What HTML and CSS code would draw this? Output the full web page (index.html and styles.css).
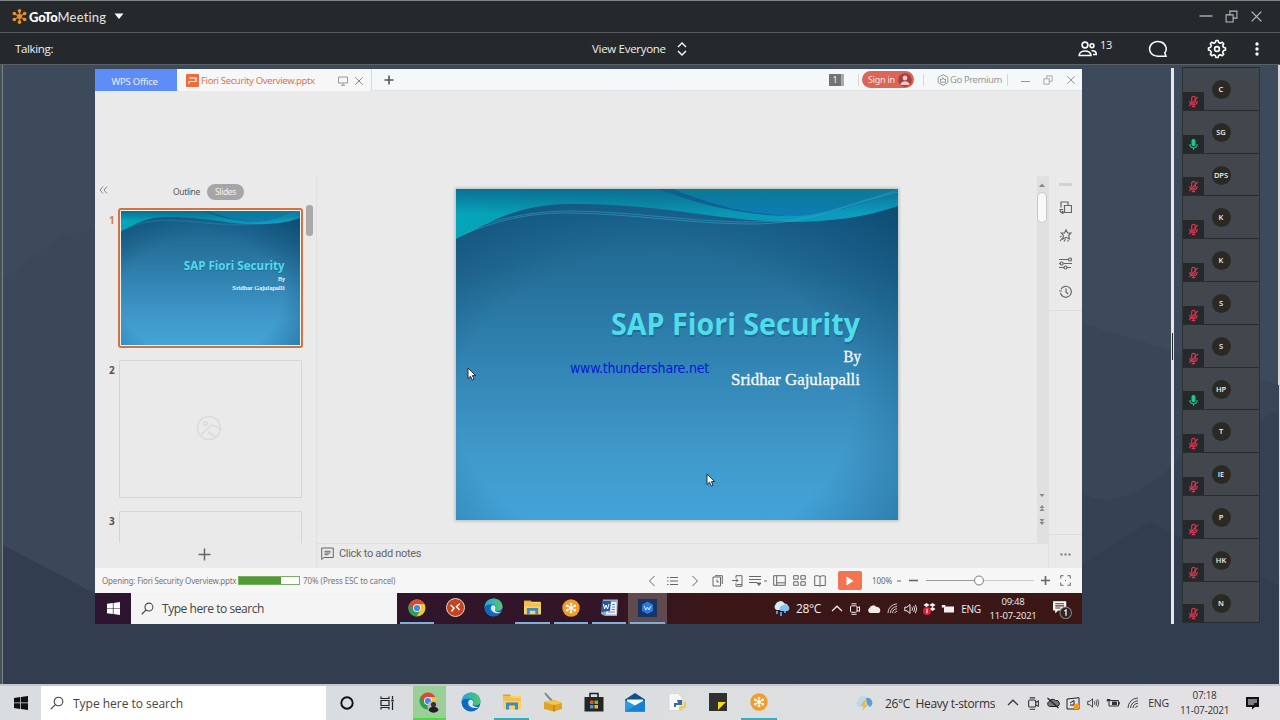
FILE: index.html
```html
<!DOCTYPE html>
<html lang="en">
<head>
  <meta charset="utf-8">
  <title>GoToMeeting</title>
  <link rel="stylesheet" href="styles.css">
</head>
<body>

<!-- shared icons -->
<svg class="defs" width="0" height="0">
  <defs>
    <linearGradient id="bg" x1="0" y1="0" x2="0" y2="1">
      <stop offset="0" stop-color="#1a6691"/>
      <stop offset=".25" stop-color="#246f99"/>
      <stop offset=".55" stop-color="#3386b5"/>
      <stop offset=".8" stop-color="#4099ca"/>
      <stop offset="1" stop-color="#43a3d8"/>
    </linearGradient>
    <radialGradient id="shade" cx=".45" cy=".65" r=".9">
      <stop offset=".5" stop-color="#04395e" stop-opacity="0"/>
      <stop offset="1" stop-color="#04395e" stop-opacity=".75"/>
    </radialGradient>
    <linearGradient id="wave" x1="0" y1="0" x2="1" y2="0">
      <stop offset="0" stop-color="#05a5ba"/>
      <stop offset=".45" stop-color="#0a94b0"/>
      <stop offset="1" stop-color="#0b9fc0"/>
    </linearGradient>
    <linearGradient id="waveTop" x1="0" y1="0" x2="0" y2="1">
      <stop offset="0" stop-color="#0b5f86" stop-opacity=".75"/>
      <stop offset=".5" stop-color="#0b5f86" stop-opacity="0"/>
    </linearGradient>
    <linearGradient id="waveBlue" x1="0" y1="0" x2="0" y2="1">
      <stop offset="0" stop-color="#0d7a93"/>
      <stop offset="1" stop-color="#0c7cb8"/>
    </linearGradient>
    <linearGradient id="edgeG" x1="0" y1="0" x2="1" y2="1">
      <stop offset="0" stop-color="#1fa4dc"/>
      <stop offset="1" stop-color="#0d57a8"/>
    </linearGradient>
    <linearGradient id="edgeT" x1="0" y1="0" x2="1" y2="0">
      <stop offset="0" stop-color="#21a6e0"/>
      <stop offset="1" stop-color="#51c768"/>
    </linearGradient>
  </defs>

  <symbol id="slide" viewBox="0 0 442 331">
    <rect width="442" height="331" fill="url(#bg)"/>
    <rect width="442" height="331" fill="url(#shade)"/>
    <path d="M0 0H442V17C410 28 375 33 334 33C275 32 235 22 184 18C150 15 130 15 111 15C60 16 38 32 0 50Z" fill="url(#wave)"/>
    <path d="M0 0H442V17C410 28 375 33 334 33C275 32 235 22 184 18C150 15 130 15 111 15C60 16 38 32 0 50Z" fill="url(#waveTop)"/>
    <path d="M202 0H225L330 27L311 26C270 22 240 14 202 0Z" fill="#0c6190"/>
    <path d="M217 0H442V1C405 16 370 27 337 27C290 25 262 18 217 0Z" fill="url(#waveBlue)"/>
    <path d="M8 45C50 28 80 24 111 24C170 24 235 35 294 35C355 35 380 18 442 3" fill="none" stroke="#39b6c4" stroke-width=".8" opacity=".6"/>
    <path d="M20 38C55 26 85 22 115 22C170 22 235 33 294 33C350 33 385 18 442 1" fill="none" stroke="#2595c4" stroke-width=".7"/>
    <g text-anchor="end">
      <text x="404.500" y="147.500" class="slide-title shadow" textLength="249" lengthAdjust="spacingAndGlyphs">SAP Fiori Security</text>
      <text x="404" y="145.500" class="slide-title" textLength="249" lengthAdjust="spacingAndGlyphs">SAP Fiori Security</text>
      <text x="405" y="173" class="slide-sub" textLength="17.500" lengthAdjust="spacingAndGlyphs">By</text>
      <text x="404" y="196" class="slide-sub" textLength="129" lengthAdjust="spacingAndGlyphs">Sridhar Gajulapalli</text>
    </g>
  </symbol>

  <symbol id="gtm" viewBox="0 0 14 14">
    <g stroke="currentColor" stroke-width="1.3">
      <path d="M7 1.500V12.500M2 4.200L12 9.800M2 9.800L12 4.200"/>
    </g>
    <g fill="currentColor">
      <circle cx="7" cy="7" r="2.300"/>
      <circle cx="7" cy="1.700" r="1.700"/><circle cx="7" cy="12.300" r="1.700"/>
      <circle cx="2.200" cy="4.200" r="1.700"/><circle cx="11.800" cy="9.800" r="1.700"/>
      <circle cx="2.200" cy="9.800" r="1.700"/><circle cx="11.800" cy="4.200" r="1.700"/>
    </g>
  </symbol>
  <symbol id="mic" viewBox="0 0 12 14">
    <rect x="3.800" y="1" width="4.400" height="8" rx="2.200" fill="#16c98d"/>
    <path d="M2 6.500C2 12 10 12 10 6.500M6 10.500V13" fill="none" stroke="#16c98d" stroke-width="1.200"/>
  </symbol>
  <symbol id="muted" viewBox="0 0 12 14">
    <rect x="4" y="1.500" width="4" height="7.500" rx="2" fill="none" stroke="#dc3350" stroke-width="1.300"/>
    <path d="M2 6.500C2 12 10 12 10 6.500M6 10.500V12.500M4 12.500H8M1.300 11.800L10.800 2" fill="none" stroke="#dc3350" stroke-width="1.300"/>
  </symbol>
  <symbol id="win" viewBox="0 0 14 14">
    <path d="M0 2L6.300 1.100V6.600H0ZM7 1L14 0V6.600H7ZM0 7.300H6.300V12.900L0 12ZM7 7.300H14V14L7 13Z" fill="currentColor"/>
  </symbol>
  <symbol id="search" viewBox="0 0 14 14">
    <circle cx="8.500" cy="5.500" r="4.300" fill="none" stroke="currentColor" stroke-width="1.100"/>
    <path d="M5.400 8.600L.8 13.200" stroke="currentColor" stroke-width="1.200"/>
  </symbol>
  <symbol id="chrome" viewBox="0 0 18 18">
    <circle cx="9" cy="9" r="8.500" fill="#f3c435"/>
    <path d="M9 9L1.700 4.600A8.500 8.500 0 0 0 8.600 17.500L12.500 11Z" fill="#2d9e52"/>
    <path d="M1.700 4.700A8.500 8.500 0 0 1 16.400 5H9L5.500 11Z" fill="#d8493a"/>
    <circle cx="9" cy="9" r="4" fill="#f2f2f2"/>
    <circle cx="9" cy="9" r="3.100" fill="#4a86e0"/>
  </symbol>
  <symbol id="edge" viewBox="0 0 20 20">
    <circle cx="10" cy="10" r="9.500" fill="url(#edgeG)"/>
    <path d="M.6 9C1.500 3.500 5.500.5 10.300.5C16 .5 19.500 5 19.500 9C19.500 12 17 13.500 14.500 13.500C12.500 13.500 11.500 12.800 12.200 11.500C13.500 8.500 11 6.300 7.800 6.300C4.500 6.300 2 7.500.6 9Z" fill="url(#edgeT)"/>
    <path d="M8.500 8C5.500 10.500 8.500 16 13.500 16C15.500 16 17 15.300 18 14.400C14 16 10.500 13.500 12 11.500C13 9 10.500 7 8.500 8Z" fill="#dcecf2"/>
    <path d="M7.500 8.500C4.500 11.500 7 17 12 18.800C8 20.500.8 17 .6 9.500C3 6.500 6.500 6.500 7.500 8.500Z" fill="#1467b8"/>
  </symbol>
  <symbol id="folder" viewBox="0 0 20 18">
    <path d="M1 1.500H8L9.500 3.500H1Z" fill="#d9a02c"/>
    <rect x="1" y="3" width="18" height="13.500" rx=".5" fill="#f7d269"/>
    <path d="M1 3H8L9.500 5H19V8H1Z" fill="#f2c04c"/>
    <path d="M4 9.500H16V16.500H13V12.500H7V16.500H4Z" fill="#3f8cc4"/>
  </symbol>
  <symbol id="gtm-badge" viewBox="0 0 18 18">
    <circle cx="9" cy="9" r="8.700" fill="#f39c2e"/>
    <svg x="3.500" y="3.500" width="11" height="11" color="#fff8ec"><use href="#gtm"/></svg>
  </symbol>
  <symbol id="up" viewBox="0 0 12 12"><path d="M1 8L6 3.200L11 8" fill="none" stroke="currentColor" stroke-width="1.200"/></symbol>
  <symbol id="cam" viewBox="0 0 12 12">
    <rect x="1.500" y="2.800" width="6.500" height="6.500" rx="1.200" fill="none" stroke="currentColor"/>
    <path d="M8 5L10.500 3.700V8.500L8 7.300M2.500 .8H7.500M2.500 11.300H7.500" fill="none" stroke="currentColor"/>
  </symbol>
  <symbol id="wifi" viewBox="0 0 12 12">
    <path d="M1 11A10 10 0 0 1 11 1M3.600 11A7.500 7.500 0 0 1 11 3.800M6 11A5 5 0 0 1 11 6.400M8.500 11A2.500 2.500 0 0 1 11 9" fill="none" stroke="currentColor" stroke-width=".9"/>
  </symbol>
  <symbol id="speaker" viewBox="0 0 14 12">
    <path d="M.8 4.200H3L6 1.500V10.500L3 7.800H.8Z" fill="none" stroke="currentColor"/>
    <path d="M8 4.300Q9 6 8 7.700M9.700 3Q11.500 6 9.700 9M11.400 1.800Q13.800 6 11.400 10.200" fill="none" stroke="currentColor" stroke-width=".9"/>
  </symbol>
  <symbol id="battery" viewBox="0 0 14 12">
    <path d="M4 3.500H12.500V9H3V5" fill="none" stroke="currentColor"/>
    <path d="M6 4.500H11V8H6ZM12.500 5H13.800V7.500H12.500ZM.8 2H4.300V4.500H.8Z" fill="currentColor"/>
  </symbol>
  <symbol id="cursor" viewBox="0 0 10 14">
    <path d="M1 1V11.500L3.500 9.200L5.200 13L7 12.200L5.400 8.600H8.700Z" fill="#fff" stroke="#16202c" stroke-width=".9"/>
  </symbol>
  <symbol id="restore" viewBox="0 0 12 12">
    <path d="M1 4.500H7.500V11H1ZM4.500 4.500V1H11V7.500H7.500" fill="none" stroke="currentColor"/>
  </symbol>
  <symbol id="x" viewBox="0 0 12 12"><path d="M1.500 1.500L10.500 10.500M10.500 1.500L1.500 10.500" stroke="currentColor" stroke-width="1.200"/></symbol>
</svg>

<header class="titlebar">
  <svg class="logo" width="15" height="15"><use href="#gtm"/></svg>
  <span class="brand"><b>GoTo</b>Meeting</span>
  <svg width="10" height="7" viewBox="0 0 10 7"><path d="M.5 .5H9.500L5 6Z" fill="#fff"/></svg>
  <div class="winbtns">
    <svg width="14" height="12"><path d="M.5 6H13.500" stroke="currentColor" stroke-width="1.300"/></svg>
    <svg width="13" height="13"><use href="#restore"/></svg>
    <svg width="13" height="13"><use href="#x"/></svg>
  </div>
</header>

<div class="toolbar">
  <span class="talking">Talking:</span>
  <span class="view">View Everyone
    <svg width="10" height="14" viewBox="0 0 10 14" fill="none" stroke="#fff" stroke-width="1.400"><path d="M1 5L5 1L9 5M1 9L5 13L9 9"/></svg>
  </span>
  <div class="tools">
    <svg width="20" height="18" viewBox="0 0 20 18" fill="none" stroke="#fff" stroke-width="1.600">
      <circle cx="7" cy="5" r="2.900"/><circle cx="14" cy="5.700" r="1.900"/>
      <path d="M1.200 15.500C1.200 9.500 13 9.500 13 15.500ZM13.500 10.800C17 10.300 18.500 12 18.300 14.500H15"/>
    </svg>
    <sup>13</sup>
    <svg width="20" height="18" viewBox="0 0 20 18" fill="none" stroke="#fff" stroke-width="1.500"><path d="M18 16.300H10A8.300 7.400 0 1 1 16.800 13Z"/></svg>
    <svg width="20" height="20" viewBox="0 0 20 20" fill="none" stroke="#fff" stroke-width="1.600">
      <path d="M8.300 3.600L9 1.500H11L11.700 3.600L13.300 4.300L15.300 3.300L16.700 4.700L15.700 6.700L16.400 8.300L18.500 9V11L16.400 11.700L15.700 13.300L16.700 15.300L15.300 16.700L13.300 15.700L11.700 16.400L11 18.500H9L8.300 16.400L6.700 15.700L4.700 16.700L3.300 15.300L4.300 13.300L3.600 11.700L1.500 11V9L3.600 8.300L4.300 6.700L3.300 4.700L4.700 3.300L6.700 4.300Z" stroke-linejoin="round"/>
      <circle cx="10" cy="10" r="2.400"/>
    </svg>
    <svg width="6" height="16" viewBox="0 0 6 16" fill="#fff"><circle cx="3" cy="3" r="1.700"/><circle cx="3" cy="8" r="1.700"/><circle cx="3" cy="13" r="1.700"/></svg>
  </div>
</div>

<main class="stage">
  <svg class="hills" viewBox="0 0 1280 619" preserveAspectRatio="none">
    <path d="M0 215L60 170L95 165V619H0Z" fill="#37455a" opacity=".5"/>
    <path d="M1082 258L1172 286L1280 320V619H1082Z" fill="#394658"/>
    <path d="M1082 428C1110 444 1140 430 1180 395L1280 345V619H1082Z" fill="#354254"/>
    <path d="M0 619V480L95 530L1082 500L1150 457L1280 520V619Z" fill="#323e4f"/>
  </svg>

  <section class="share">
    <div class="tabs">
      <div class="tab-home">WPS Office</div>
      <div class="tab-file">
        <svg width="13" height="13" viewBox="0 0 13 13"><rect width="13" height="13" rx="1" fill="#ee6b3c"/><path d="M3 4H10V7.500H3V10" fill="none" stroke="#fff" stroke-width="1.200"/></svg>
        <span>Fiori Security Overview.pptx</span>
        <svg width="10" height="10" viewBox="0 0 10 10" fill="none" stroke="#999"><path d="M.5 1H9.500V7H.5ZM5 7V9M3 9.300H7"/></svg>
        <svg class="tab-x" width="10" height="10"><use href="#x"/></svg>
      </div>
      <svg class="tab-add" width="10" height="10"><path d="M5 .5V9.500M.5 5H9.500" stroke="#555" stroke-width="1.600"/></svg>
      <div class="account">
        <span class="count">1</span>
        <i></i>
        <span class="signin">Sign in
          <svg width="14" height="14" viewBox="0 0 14 14"><circle cx="7" cy="7" r="6.800" fill="#a33f3f"/><circle cx="7" cy="5" r="2.400" fill="#efc9c6"/><path d="M2.500 12C2.500 7 11.500 7 11.500 12Z" fill="#efc9c6"/></svg>
        </span>
        <i></i>
        <svg width="12" height="12" viewBox="0 0 12 12" fill="none" stroke="#9a9a9a"><path d="M6 .7L10.800 3.300V8.700L6 11.300L1.200 8.700V3.300ZM3.500 5L5 5.500L6 3.700L7 5.500L8.500 5V8.200H3.500Z"/></svg>
        <span class="premium">Go Premium</span>
        <i></i>
        <svg width="9" height="10"><path d="M0 6.500H9" stroke="#999"/></svg>
        <svg width="10" height="10"><use href="#restore"/></svg>
        <svg width="10" height="10"><use href="#x"/></svg>
      </div>
    </div>

    <div class="work">
      <div class="pane">
        <div class="pane-head">
          <svg width="9" height="8" viewBox="0 0 9 8" fill="none" stroke="#888"><path d="M4 .5L1 4L4 7.500M8 .5L5 4L8 7.500"/></svg>
          <span class="outline">Outline</span>
          <span class="pill">Slides</span>
        </div>
        <div class="list">
          <ol>
            <li class="current"><b>1</b><div class="thumb"><svg width="179" height="134"><use href="#slide"/></svg></div></li>
            <li><b>2</b><div class="thumb">
              <svg width="26" height="26" viewBox="0 0 26 26" fill="none" stroke="#d8dcdc" stroke-width="1.500"><circle cx="13" cy="13" r="11.500"/><circle cx="9.500" cy="8.500" r="2"/><path d="M5 20L15 10.500C17 9 20 11 24 14M12 17L20 22"/></svg>
            </div></li>
            <li><b>3</b><div class="thumb"></div></li>
          </ol>
          <div class="thumb-scroll"></div>
        </div>
        <div class="add"><svg width="13" height="13"><path d="M6.500 .5V12.500M.5 6.500H12.500" stroke="#666" stroke-width="1.500"/></svg></div>
      </div>

      <div class="edit">
        <div class="canvas">
          <div class="slide">
            <svg width="442" height="331"><use href="#slide"/></svg>
            <span class="watermark">www.thundershare.net</span>
            <svg class="cursor c1" width="10" height="14"><use href="#cursor"/></svg>
            <svg class="cursor c2" width="10" height="14"><use href="#cursor"/></svg>
          </div>
        </div>
        <div class="vscroll">
          <svg width="6" height="4"><path d="M0 4L3 .5L6 4Z" fill="#888"/></svg>
          <div class="knob"></div>
          <svg class="arrows" width="6" height="34" fill="#888"><path d="M.5 1H5.500L3 4ZM3 12L5.500 15H.5ZM3 15L5.500 18H.5ZM.5 26H5.500L3 29ZM.5 29H5.500L3 32Z"/></svg>
        </div>
        <div class="notes">
          <svg width="13" height="13" viewBox="0 0 13 13" fill="none" stroke="#666"><path d="M.7 1H12.300V10.500H3L.7 12.500ZM3.500 4.300H9.500M3.500 6H9.500M3.500 7.700H7.500"/></svg>
          Click to add notes
        </div>
      </div>

      <div class="side">
        <div class="side-tools">
          <div class="grip"></div>
          <svg width="13" height="13" viewBox="0 0 13 13"><path d="M2 6.500V1H9V4M5.500 4.500H12.500V11.500H5.500ZM.5 8.500H4M4.500 11.500H2L1 9M3 10L4.500 11.500L3 13" fill="none" stroke="#666" stroke-width="1.200"/></svg>
          <svg width="13" height="13" viewBox="0 0 13 13"><path d="M7 .8L8.600 4H12L9.600 6.500L10.500 10L7 8.300L3.800 10L4.500 6.500L2.200 4H5.600ZM3.500 9L1 12M6.500 10L5 12.500M9.500 11L8.500 12.500M1 8L2.500 7" fill="none" stroke="#666" stroke-width="1.100"/></svg>
          <svg width="13" height="13" viewBox="0 0 13 13"><g fill="none" stroke="#666" stroke-width="1.200"><path d="M0 2.500H9M4.500 6.500H13M0 6.500H1M0 10.500H5M8 10.500H12"/><circle cx="11" cy="2.500" r="1.500"/><circle cx="2.700" cy="6.500" r="1.500"/><circle cx="6.500" cy="10.500" r="1.500"/></g></svg>
          <svg width="13" height="13" viewBox="0 0 13 13"><path d="M1.500 8A5.500 5.500 0 1 0 2 4.200M0 6H3M7 3.500V7L9.200 9" fill="none" stroke="#666" stroke-width="1.200"/></svg>
        </div>
        <div class="more"><svg width="11" height="3" viewBox="0 0 11 3" fill="#888"><circle cx="1.500" cy="1.500" r="1.200"/><circle cx="5.500" cy="1.500" r="1.200"/><circle cx="9.500" cy="1.500" r="1.200"/></svg></div>
      </div>
    </div>

    <div class="status">
      <span>Opening: Fiori Security Overview.pptx</span>
      <div class="progress"><div style="width:70%"></div></div>
      <span class="pct">70% (Press ESC to cancel)</span>
      <div class="views">
        <svg width="8" height="12" fill="none" stroke="currentColor"><path d="M6.500 1L1.500 6L6.500 11"/></svg>
        <svg width="11" height="10" stroke="currentColor"><path d="M0 1.500H1.500M3 1.500H11M0 5H1.500M3 5H11M0 8.500H1.500M3 8.500H11"/></svg>
        <svg width="8" height="12" fill="none" stroke="currentColor"><path d="M1.500 1L6.500 6L1.500 11"/></svg>
        <svg width="11" height="12" viewBox="0 0 11 12" fill="none" stroke="currentColor"><path d="M1 2H8.500V11H1ZM3 .7H10.300V9M5 4.500V7H7"/></svg>
        <svg width="11" height="12" viewBox="0 0 11 12" fill="none" stroke="currentColor"><path d="M4 3V.7H10V11.300H4V8.500M0 5.500H6M4 3.500L6 5.500L4 7.500M5 9.500H10"/></svg>
        <svg width="18" height="12" viewBox="0 0 18 12" fill="none" stroke="currentColor"><path d="M0 1.500H12M0 4.500H12M0 7.500H8M15 6H18"/><path d="M8 8H12L10 10.500Z" fill="currentColor"/></svg>
        <svg width="13" height="11" viewBox="0 0 13 11" fill="none" stroke="currentColor"><path d="M.7 .7H12.300V10.300H.7ZM3.700 .7V10.300M3.700 7.800H12.300"/></svg>
        <svg width="13" height="11" viewBox="0 0 13 11" fill="none" stroke="currentColor"><path d="M.7 .7H5.200V4.200H.7ZM7.800 .7H12.300V4.200H7.800ZM.7 6.800H5.200V10.300H.7ZM7.800 6.800H12.300V10.300H7.800Z"/></svg>
        <svg width="12" height="12" viewBox="0 0 12 12" fill="none" stroke="currentColor"><path d="M6 1.500C4 .5 2 .7 .7 1V10.500H5L6 11.300L7 10.500H11.300V1C10 .7 8 .5 6 1.500V11"/></svg>
        <span class="play"><svg width="8" height="10"><path d="M.5 .5L7.500 5L.5 9.500Z" fill="#fff"/></svg></span>
        <span class="zoom">100%</span>
        <svg width="4" height="2"><path d="M0 1H4" stroke="currentColor"/></svg>
        <svg width="9" height="3"><path d="M0 1.500H9" stroke="currentColor" stroke-width="1.600"/></svg>
        <svg width="108" height="11" viewBox="0 0 108 11"><path d="M0 5.500H48" stroke="#999"/><path d="M58 5.500H108" stroke="#ccc"/><circle cx="53" cy="5.500" r="4.500" fill="#fff" stroke="#777"/></svg>
        <svg width="9" height="9"><path d="M4.500 0V9M0 4.500H9" stroke="currentColor" stroke-width="1.600"/></svg>
        <svg width="11" height="11" viewBox="0 0 11 11" fill="none" stroke="currentColor"><path d="M.7 3.500V.7H3.500M7.500 .7H10.300V3.500M10.300 7.500V10.300H7.500M3.500 10.300H.7V7.500M5 5.500H6"/></svg>
      </div>
    </div>

    <div class="taskbar inner">
      <div class="start"><svg width="13" height="13"><use href="#win"/></svg></div>
      <div class="find"><svg width="13" height="13"><use href="#search"/></svg>Type here to search</div>
      <div class="apps">
        <div class="open"><svg width="18" height="18"><use href="#chrome"/></svg></div>
        <div><svg width="19" height="19" viewBox="0 0 19 19"><circle cx="9.500" cy="9.500" r="9" fill="#c8421f" stroke="#e8d0cc"/><path d="M4.500 7L8 10L5.500 13.500M14 5.500L10.500 8.500L13.500 12" fill="none" stroke="#fff" stroke-width="1.500"/></svg></div>
        <div><svg width="19" height="19"><use href="#edge"/></svg></div>
        <div class="open"><svg width="19" height="17"><use href="#folder"/></svg></div>
        <div class="open"><svg width="18" height="18"><use href="#gtm-badge"/></svg></div>
        <div class="open"><svg width="19" height="18" viewBox="0 0 19 18"><path d="M3 .5H18L17 17H5L1 15Z" fill="#8fa9cb"/><path d="M7 3H16.500V15.500H6Z" fill="#f1f5f9"/><path d="M2 2H11L10 12L1 13Z" fill="#2a5797"/><path d="M3.500 5L4.500 10L6 6L7.500 10L9 5" fill="none" stroke="#fff"/><path d="M12 5.500H15M12 8H15M11.500 10.500H15M8 13H15" stroke="#7087a5"/></svg></div>
        <div class="open active"><svg width="19" height="18" viewBox="0 0 19 18"><rect width="19" height="18" fill="#173562"/><path d="M9.500 2.500L15 5.500V12L9.500 15L4 12V5.500Z" fill="#2d78e0"/><path d="M6 7L8 11L9.500 8L11 11L13 7" fill="none" stroke="#d8e8ff"/></svg></div>
      </div>
      <div class="tray">
        <svg width="18" height="17" viewBox="0 0 18 17"><path d="M4.500 10A3.500 3.500 0 0 1 3.500 4.500A5 5 0 0 1 12.500 3.500A3.500 3.500 0 0 1 14.500 10Z" fill="#d8eaf6"/><path d="M9 11A3 3 0 0 1 11 5.500A3.500 3.500 0 0 1 16 11Z" fill="#8cc0e8"/><path d="M5 11V14M9 12V16M13 11V13" stroke="#3fa0e8" stroke-width="2"/></svg>
        <span class="temp">28°C</span>
        <svg width="12" height="12"><use href="#up"/></svg>
        <svg width="12" height="12"><use href="#cam"/></svg>
        <svg width="14" height="10" viewBox="0 0 14 10"><path d="M3 9A2.800 2.800 0 0 1 2.500 4A4 4 0 0 1 9.500 3A3.200 3.200 0 0 1 11.500 9Z" fill="#f2ece8"/></svg>
        <svg width="11" height="11"><use href="#wifi"/></svg>
        <svg width="14" height="12"><use href="#speaker"/></svg>
        <svg width="13" height="12" viewBox="0 0 13 12"><path d="M3.500 0L6.500 2L3.500 4L.5 2ZM9.500 0L12.500 2L9.500 4L6.500 2ZM9.500 4L12.500 6L9.500 8L6.500 6Z" fill="#fff"/><circle cx="4" cy="8" r="4" fill="#d81e3c"/><path d="M4 5.700V10.300" stroke="#fff"/></svg>
        <svg width="14" height="12" viewBox="0 0 14 12"><path d="M4 3.500H13V9.500H3V5ZM.8 2H4.300V4.500H.8Z" fill="currentColor"/></svg>
        <span>ENG</span>
        <span class="clock">09:48<br>11-07-2021</span>
        <svg width="21" height="21" viewBox="0 0 20 20"><path d="M2 3H14.500V12H7L4 14.500V12H2Z" fill="#fff"/><path d="M4 5.500H12.500M4 7.500H12.500M4 9.500H9" stroke="#57312e"/><circle cx="14" cy="14" r="5.500" fill="#2d2526" stroke="#8d8383"/><path d="M12.800 12.300L14.300 11.300V17" fill="none" stroke="#fff" stroke-width="1.200"/></svg>
      </div>
    </div>
  </section>

  <div class="splitter"></div>

  <ul class="people">
    <li><i>C</i><em><svg><use href="#muted"/></svg></em></li>
    <li><i>SG</i><em><svg><use href="#mic"/></svg></em></li>
    <li><i>DPS</i><em><svg><use href="#muted"/></svg></em></li>
    <li><i>K</i><em><svg><use href="#muted"/></svg></em></li>
    <li><i>K</i><em><svg><use href="#muted"/></svg></em></li>
    <li><i>S</i><em><svg><use href="#muted"/></svg></em></li>
    <li><i>S</i><em><svg><use href="#muted"/></svg></em></li>
    <li><i>HP</i><em><svg><use href="#mic"/></svg></em></li>
    <li><i>T</i><em><svg><use href="#muted"/></svg></em></li>
    <li><i>IE</i><em><svg><use href="#muted"/></svg></em></li>
    <li><i>P</i><em><svg><use href="#muted"/></svg></em></li>
    <li><i>HK</i><em><svg><use href="#muted"/></svg></em></li>
    <li><i>N</i><em><svg><use href="#muted"/></svg></em></li>
  </ul>
</main>

<footer class="taskbar outer">
  <div class="start"><svg width="14" height="14"><use href="#win"/></svg></div>
  <div class="find"><svg width="14" height="14"><use href="#search"/></svg>Type here to search</div>
  <div class="btn"><svg width="14" height="14"><circle cx="7" cy="7" r="5.700" fill="none" stroke="#111" stroke-width="1.900"/></svg></div>
  <div class="btn"><svg width="15" height="14" viewBox="0 0 15 14" fill="none" stroke="#222" stroke-width="1.200"><path d="M1 .5V2.500H9V.5M1 4.500H9V9.500H1ZM1 13.500V11.500H9V13.500M12.500 0V3M12.500 6V14"/><path d="M11.300 4.500H13.700" stroke-width="2"/></svg></div>
  <div class="apps">
    <div class="open green"><svg width="21" height="21" viewBox="0 0 21 21"><svg width="18" height="18"><use href="#chrome"/></svg><circle cx="14.500" cy="14.500" r="6" fill="#bdb9b6"/><circle cx="14.500" cy="12.500" r="2.600" fill="#3a302e"/><path d="M9.500 18C10 13.500 19 13.500 19.500 18C17 21.500 12 21.500 9.500 18Z" fill="#1f1f22"/></svg></div>
    <div><svg width="20" height="20"><use href="#edge"/></svg></div>
    <div class="open"><svg width="20" height="18"><use href="#folder"/></svg></div>
    <div><svg width="20" height="20" viewBox="0 0 20 20"><path d="M2 1L4 3.500L10 10" fill="none" stroke="#888" stroke-width="2"/><path d="M1 10L12 8L19 11V17L11 19.500L1 17Z" fill="#e0a326"/><path d="M1 10L12 8L19 11L11 13Z" fill="#f4c64c"/><path d="M11 13V19.500" stroke="#a87414"/></svg></div>
    <div><svg width="20" height="20" viewBox="0 0 20 20"><path d="M6 5V1.500H14V5" fill="none" stroke="#222" stroke-width="1.600"/><path d="M.5 5H19.500V19.500H.5Z" fill="#252525"/><path d="M6 8.500H9.500V12H6Z" fill="#e8502c"/><path d="M10.500 8.500H14V12H10.500Z" fill="#7fba27"/><path d="M6 13H9.500V16.500H6Z" fill="#27a4e8"/><path d="M10.500 13H14V16.500H10.500Z" fill="#f8b81c"/></svg></div>
    <div><svg width="20" height="19" viewBox="0 0 20 19"><path d="M0 6.500L10 0L20 6.500V18.500H0Z" fill="#0f4f93"/><path d="M2 6.500H18V14H2Z" fill="#f3f7fa"/><path d="M0 7L10 12.500L20 7V18.500H0Z" fill="#2a9ce2"/><path d="M0 18.500L20 7V18.500Z" fill="#1780cf"/></svg></div>
    <div><svg width="20" height="19" viewBox="0 0 20 19"><path d="M2 .5H11L15 4.500V17.500H2Z" fill="#f7f7f5" stroke="#ccc" stroke-width=".6"/><path d="M10 7H15V12H9V14H7V10H11Z" fill="#366d9c"/><path d="M12 17V13H17V9H19V15H15V18Z" fill="#f3ca45"/></svg></div>
    <div><svg width="18" height="18" viewBox="0 0 18 18"><path d="M0 0H18V18H0Z" fill="#303030"/><path d="M9 9H17L9 17Z" fill="#f5d91e"/></svg></div>
    <div class="open"><svg width="18" height="18"><use href="#gtm-badge"/></svg></div>
  </div>
  <div class="tray">
    <svg width="18" height="17" viewBox="0 0 18 17"><path d="M4 12A3.500 3.500 0 0 1 3 5.500A5.500 5.500 0 0 1 12.500 3A4.800 4.800 0 0 1 14.500 12Z" fill="#b9d9ee"/><path d="M11 3A5 5 0 0 1 15 12L12 9Z" fill="#5c9bd4"/><path d="M9 5.500L5.500 11H8.500L7.500 16L12.500 9.500H9.500L11.500 5.500Z" fill="#f5b92a"/></svg>
    <span class="temp">26°C&nbsp; Heavy t-storms</span>
    <svg width="12" height="12"><use href="#up"/></svg>
    <svg width="13" height="13"><use href="#cam"/></svg>
    <svg width="14" height="12" viewBox="0 0 14 12"><path d="M3.500 9.500A2.800 2.800 0 0 1 3 4.500A4 4 0 0 1 9.500 3.500A3 3 0 0 1 11 9.500Z" fill="#777" stroke="#222"/><path d="M1.500 1L12.500 11" stroke="#222" stroke-width="1.200"/></svg>
    <svg width="14" height="13" viewBox="0 0 14 13"><path d="M1 2L13 .7V12H1ZM4 6L8 3.500V8H4" fill="none" stroke="#222"/><circle cx="10.500" cy="9.500" r="3" fill="#f39a1f"/></svg>
    <svg width="13" height="12"><use href="#speaker"/></svg>
    <svg width="14" height="12"><use href="#battery"/></svg>
    <svg width="12" height="12"><use href="#wifi"/></svg>
    <span>ENG</span>
    <span class="clock">07:18<br>11-07-2021</span>
    <svg width="15" height="14" viewBox="0 0 15 14"><path d="M1 1H14V11H10L7 13.500V11H1Z" fill="#111"/><path d="M3 4H12M3 6H12M3 8H9" stroke="#eee"/></svg>
  </div>
</footer>

</body>
</html>
```
FILE: styles.css
```css
* { box-sizing: border-box; }

html, body { height: 100%; }

body {
  margin: 0;
  width: 1280px;
  height: 720px;
  overflow: hidden;
  display: flex;
  flex-direction: column;
  font: 12px "Open Sans", "Noto Sans", sans-serif;
  background: #3d4a5b;
}

svg { display: block; flex: none; }
ul, ol { margin: 0; padding: 0; list-style: none; }
i, em { font-style: normal; }
.defs { position: absolute; }

/* meeting window */

.titlebar {
  height: 33px;
  flex: none;
  display: flex;
  align-items: center;
  padding: 0 17px 0 12px;
  background: #25292b;
  border-top: 1px solid #7d8585;
  border-bottom: 1px solid #55595b;
  color: #fff;
}
.logo { color: #f18d1a; margin-right: 2px; }
.brand { font: 13px Lato, sans-serif; width: 85px; color: #e4e4e4; letter-spacing: .2px; }
.brand b { font-weight: 900; color: #fff; letter-spacing: -.15px; }
.winbtns { margin-left: auto; display: flex; gap: 12px; color: #b4bcc4; }

.toolbar {
  height: 32px;
  flex: none;
  display: grid;
  grid-template-columns: 577px 1fr 206px;
  align-items: center;
  padding-left: 15px;
  background: #25292b;
  border-bottom: 1px solid #5b6062;
  color: #f0f0f0;
  font-size: 11.500px;
}
.talking { letter-spacing: -.35px; }
.view { display: flex; align-items: center; gap: 11px; letter-spacing: -.3px; }
.tools { display: grid; grid-template-columns: 24px 12px 92px 25px 55px; align-items: center; justify-items: center; margin-left: 2px; }
.tools sup { font-size: 11px; line-height: 12px; align-self: start; letter-spacing: -.3px; }

.stage {
  position: relative;
  height: 619px;
  flex: none;
  display: flex;
  align-items: flex-start;
  padding: 3px 0 0 93px;
  border-left: 2px solid #465159;
  border-right: 2px solid #dadada;
  background: #3d4a5b;
  box-shadow: inset 1px 0 #7a8487;
}
.hills { position: absolute; left: 1px; top: 0; width: 100%; height: 100%; }

.splitter {
  position: relative;
  flex: none;
  width: 3px;
  height: 556px;
  margin-left: 89px;
  background: #e4e6ea;
}
.splitter::after { content: ""; position: absolute; top: 265px; left: 1px; width: 1px; height: 27px; background: #20262c; }

.people { position: relative; flex: none; width: 78px; margin: -1px 0 0 8px; border: 1px solid #2b3135; border-width: 0 1px; }
.people li {
  height: 42.8px;
  display: flex;
  position: relative;
  justify-content: center;
  padding-top: 12px;
  background: #42474e;
  border-top: 1px solid #262c30;
}
.people li:last-child { border-bottom: 1px solid #262c30; }
.people i {
  width: 19px;
  height: 19px;
  border-radius: 50%;
  background: #2b2923;
  color: #f2f2f2;
  font-size: 7.500px;
  font-weight: 600;
  line-height: 19px;
  text-align: center;
}
.people em {
  position: absolute;
  left: 0;
  bottom: 0;
  width: 21px;
  height: 18px;
  padding: 3px 5px;
  background: #25292b;
}
.people em svg { width: 11px; height: 13px; }

/* shared screen */

.share {
  position: relative;
  flex: none;
  width: 987px;
  height: 555px;
  margin-top: 1px;
  display: flex;
  flex-direction: column;
  background: #eaeaea;
  font-family: "Noto Sans", sans-serif;
}

.tabs { height: 22px; display: flex; align-items: center; background: #f4f8f8; font-size: 9.500px; border-bottom: 1px solid #dfe3e3; letter-spacing: -.25px; }
.tab-home { width: 82px; height: 22px; line-height: 25px; padding-right: 3px; text-align: center; background: #5f8df8; color: #e6eeff; font-size: 9.500px; margin-right: 2px; }
.tab-file { width: 193px; height: 22px; display: flex; align-items: center; padding: 2px 0 0 7px; background: #f7f7f7; border-right: 1px solid #d5dada; color: #d67650; }
.tab-file span { width: 137px; margin-left: 2px; white-space: nowrap; letter-spacing: -.36px; }
.tab-file .tab-x { margin-left: 6px; color: #888; }
.tab-add { margin-left: 12px; }
.account { margin-left: auto; display: flex; align-items: center; padding-right: 6px; color: #999; }
.account i { width: 1px; height: 12px; background: #d4d8d8; }
.count { width: 15px; height: 12px; margin-right: 14px; background: #747474; border-right: 3px solid #aaa; color: #fff; font-size: 8px; line-height: 12px; text-align: center; }
.signin { width: 52px; height: 17px; margin: 0 9px 0 3px; padding: 0 2px 0 6px; display: flex; align-items: center; justify-content: space-between; border-radius: 9px; background: #dc6459; color: #fbe2df; font-size: 9px; white-space: nowrap; }
.account i + svg { margin-left: 13px; }
.premium { width: 57px; margin-left: 1px; white-space: nowrap; letter-spacing: -.4px; }
.account svg + svg { margin-left: 13px; }

.work { height: 477px; display: flex; padding-top: 85px; }
.pane { width: 222px; border-right: 1px solid #e0e0e0; display: flex; flex-direction: column; }
.pane-head { height: 29px; display: flex; align-items: center; padding-left: 4px; font-size: 8.500px; letter-spacing: -.35px; color: #555; }
.pane-head svg { margin-bottom: 2px; }
.outline { width: 34px; margin-left: 65px; padding-top: 2px; }
.pill { width: 37px; height: 16px; margin-top: 2px; border-radius: 8px; background: #a6a6a6; color: #f3f3f3; text-align: center; line-height: 16px; }
.list { height: 338px; overflow: hidden; display: flex; }
.list ol { width: 211px; padding-top: 3px; }
.list li { display: flex; padding-left: 14px; margin-bottom: 13px; }
.list b { width: 10px; padding-top: 3px; font: bold 10px "Open Sans", sans-serif; color: #555; }
.list .current { margin-bottom: 12px; padding-left: 14px; }
.list .current b { width: 9px; padding-top: 5px; color: #cf8043; }
.thumb { width: 183px; height: 138px; border: 1px solid #d2d6d6; border-radius: 1px; padding: 0 3px 3px 0; display: flex; align-items: center; justify-content: center; }
.current .thumb { width: 185px; height: 140px; padding: 0; border: 2px solid #d0733e; border-radius: 3px; background: #f2f2f2; }
.thumb-scroll { width: 7px; height: 31px; border-radius: 3px; background: #a9a9a9; }
.add { padding: 5px 0 0 103px; }

.edit {
  width: 731px;
  display: grid;
  grid-template: 367px 25px / 720px 11px;
}
.canvas { padding: 13px 0 0 139px; }
.slide { position: relative; width: 442px; height: 331px; box-shadow: 0 0 3px 1px #b3bcbc; }
.slide-title { font: bold 30px "Open Sans", sans-serif; fill: #50dcea; }
.slide-title.shadow { fill: #145a80; opacity: .5; }
.slide-sub { font: 17px "Liberation Serif", serif; fill: #f4fafc; stroke: #f4fafc; stroke-width: .35; }
.watermark {
  position: absolute;
  left: 114px;
  top: 170px;
  font: 14px/18px "DejaVu Sans Condensed", "DejaVu Sans", sans-serif;
  font-stretch: condensed;
  letter-spacing: -.2px;
  white-space: nowrap;
  color: #0618d8;
}
.cursor { position: absolute; }
.c1 { left: 11px; top: 178px; }
.c2 { left: 250px; top: 284px; }

.vscroll { display: flex; flex-direction: column; align-items: center; padding: 7px 1px 16px 0; background: #e0e0e0; }
.knob { width: 10px; height: 31px; margin-top: 5px; border: 1px solid #c8c8c8; border-radius: 5px; background: #f8f8f8; }
.arrows { margin-top: auto; }
.notes { grid-column: 1 / 3; display: flex; align-items: center; gap: 5px; padding: 0 0 5px 4px; border-top: 1px solid #e0e0e0; font: 11px Roboto, sans-serif; letter-spacing: -.3px; color: #666; }

.side { width: 34px; display: flex; flex-direction: column; border-left: 1px solid #e0e0e0; }
.side-tools { height: 135px; padding-top: 7px; display: flex; flex-direction: column; align-items: center; gap: 15px; border-bottom: 1px solid #dcdcdc; }
.grip { width: 13px; height: 3px; background: #d2d2d2; }
.more { margin-top: auto; height: 34px; display: flex; justify-content: center; padding-top: 18px; border-top: 1px solid #dcdcdc; }

.status { height: 25px; display: flex; align-items: center; padding-left: 7px; background: #f6f6f6; font-size: 8px; letter-spacing: -.08px; color: #777; white-space: nowrap; }
.status > span:first-child { width: 136px; letter-spacing: -.18px; }
.progress { width: 62px; height: 9px; border: 1px solid #78b262; background: #fff; }
.progress div { height: 100%; background: #519a35; }
.pct { margin-left: 3px; }
.views {
  margin-left: auto;
  display: grid;
  grid-template-columns: 21px 21px 24px 20px 20px 22px 21px 19px 22px 37px 28px 6px 22px 111px 20px 20px;
  align-items: center;
  justify-items: center;
  padding-right: 7px;
  color: #666;
}
.play { width: 24px; height: 19px; display: flex; align-items: center; justify-content: center; border-radius: 2px; background: #f47350; }

/* taskbars */

.taskbar { display: flex; align-items: stretch; }
.taskbar > div { display: flex; align-items: center; }
.start, .btn { justify-content: center; }
.find { color: #444; white-space: nowrap; }
.apps > div { display: flex; align-items: center; justify-content: center; align-self: stretch; border-bottom: 2px solid transparent; }
.tray { margin-left: auto; white-space: nowrap; text-align: center; }
.taskbar .tray { display: grid; justify-items: center; }

.inner { height: 31px; background: linear-gradient(90deg, #2d1531, #321527 50%, #3a1618 62%, #3b1716); color: #f2eeee; font-family: "Open Sans", sans-serif; }
.inner .start { width: 36px; color: #fff; }
.inner .find { width: 266px; padding-left: 10px; gap: 8px; background: #f4f4f4; letter-spacing: -.45px; margin-right: 2px; }
.inner .apps > div { width: 38.400px; padding: 0; }
.inner .apps { margin-left: -1px; }
.inner .open { border-image: linear-gradient(90deg, transparent 8%, #7eaedb 8%, #7eaedb 92%, transparent 92%) 1; border-width: 0 0 2px; }
.inner .active { background: #604a4e; }
.inner .tray { grid-template-columns: 18px 38px repeat(7, 18.500px) 28px 56px 40px; padding-right: 1px; font-size: 10px; letter-spacing: -.3px; }
.inner .temp { font-size: 12px; }
.inner .clock { font-size: 9.500px; line-height: 14px; letter-spacing: -.25px; }

.outer { height: 36px; flex: none; border-top: 2px solid #c4c8ca; background: linear-gradient(90deg, #d9dde0, #dcdedf 60%, #e4e1e4); color: #333; }
.outer .start { width: 41px; color: #111; }
.outer .find { width: 285px; padding-left: 9px; gap: 9px; background: #fff; letter-spacing: -.02px; }
.outer .btn { width: 41px; }
.outer .apps { margin-left: 1px; }
.outer .apps > div { width: 41.200px; }
.outer .open { border-image: linear-gradient(90deg, transparent 9%, #35aebb 9%, #35aebb 91%, transparent 91%) 1; border-width: 0 0 2px; }
.outer .green { background: #9bcf98; border-image: none; border-bottom: 2px solid #4fd846; }
.outer .apps > .green { width: 33px; margin: 0 4px; }
.outer .tray { grid-template-columns: 26px 126px repeat(7, 20px) 31px 61px 34px; padding-right: 11px; font-size: 10.500px; letter-spacing: -.3px; }
.outer .temp { font-size: 12px; letter-spacing: -.35px; }
.outer .clock { font-size: 10px; line-height: 15px; letter-spacing: -.3px; }
```
